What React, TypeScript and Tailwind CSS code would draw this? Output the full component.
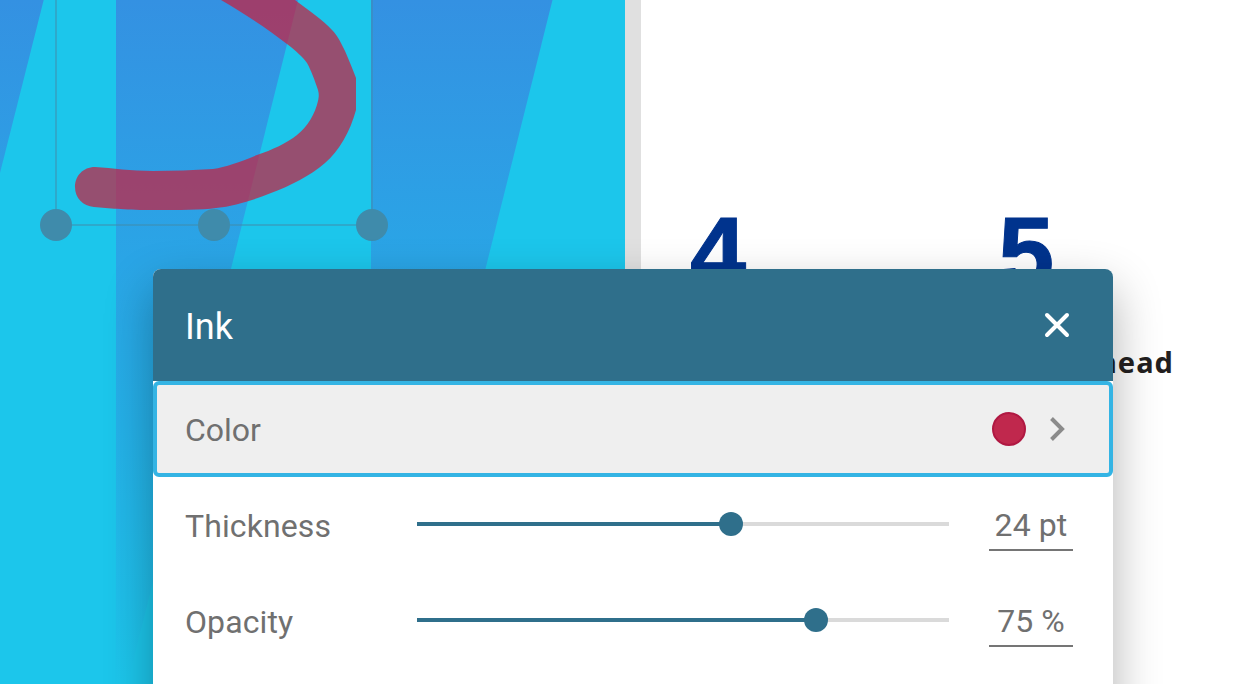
import React from "react";

function PageArtwork() {
  return (
    <svg className="block h-[684px] w-[625px] shrink-0" viewBox="0 0 625 684" fill="none">
      <defs>
        <linearGradient id="band" gradientUnits="userSpaceOnUse" x1="0" y1="0" x2="0" y2="684">
          <stop offset="0" stopColor="#3491e2" />
          <stop offset="0.38" stopColor="#2aa5e6" />
          <stop offset="0.62" stopColor="#25b0e8" />
          <stop offset="1" stopColor="#1cc6eb" />
        </linearGradient>
      </defs>
      <rect width="625" height="684" fill="#1cc6eb" />
      <path d="M0 0H43.7L0 173Z" fill="url(#band)" />
      <path d="M116 0H298L127.5 684H116Z" fill="url(#band)" />
      <path d="M371 0H552.5L382 684H371Z" fill="url(#band)" />
      <path
        d="M221 0C245 14 268 29 287 44C296 51 303 57 307 63C311 70 315 81 318 90C319 94 319 96 318 101C315 114 308 126 297 135C287 143 272 150 257 155C240 162 226 167 213 169C193 170 173 171 153 171C130 171 113 168 95 167C83 167 75 176 75 187C75 198 83 206 94 207C110 208 122 210 150 210C180 210 202 210 216 208C235 206 254 200 271 193C290 186 310 176 325 163C339 151 350 132 356 110V78C353 70 349 60 345 51C341 43 338 36 332 30C323 20 308 10 295 0Z"
        fill="#ca1d3c"
        fillOpacity="0.7"
      />
      <path d="M56 0V209M72 225H198M230 225H356M372 0V209" stroke="#3f8bab" strokeOpacity="0.5" strokeWidth="2" />
      <g fill="#3f8bab">
        <circle cx="56" cy="225" r="16" />
        <circle cx="214" cy="225" r="16" />
        <circle cx="372" cy="225" r="16" />
      </g>
    </svg>
  );
}

function SliderRow({ label, value, percent }: { label: string; value: string; percent: number }) {
  return (
    <div className="flex h-24 items-center pr-10 pl-8">
      <span className="w-[232px] pt-px tracking-[0.1px]">{label}</span>
      <div className="relative -mt-0.5 h-1 w-[532px] bg-[#dadada]">
        <div className="h-full bg-[#2f6f8b]" style={{ width: `${percent}%` }} />
        <div
          className="absolute top-1/2 size-6 -translate-x-1/2 -translate-y-1/2 rounded-full bg-[#2f6f8b]"
          style={{ left: `${percent}%` }}
        />
      </div>
      <div className="-mt-[3px] ml-10 flex h-[55px] w-[84px] items-center justify-center border-b-2 border-[#757575] pt-1 tracking-[0.1px]">
        {value}
      </div>
    </div>
  );
}

export default function App() {
  return (
    <main className="relative flex h-[684px] w-[1255px] overflow-hidden bg-white">
      <PageArtwork />
      <div className="w-4 shrink-0 bg-[#e0e0e0]" />
      <section className="relative grow font-bold">
        <span className="absolute top-[192px] left-[49px] font-['Liberation_Sans',sans-serif] text-[101px] leading-[120px] text-[#00338d] [-webkit-text-stroke:1px_#00338d]">4</span>
        <span className="absolute top-[192px] left-[357px] font-['Liberation_Sans',sans-serif] text-[101px] leading-[120px] text-[#00338d] [-webkit-text-stroke:1px_#00338d]">5</span>
        <span className="absolute top-[342px] left-[457px] font-['Noto_Sans',sans-serif] text-[29px] leading-10 tracking-[1px] text-[#231f20]">head</span>
      </section>

      <div className="absolute top-[269px] left-[153px] h-[500px] w-[960px] rounded-t-lg bg-white font-[Roboto,sans-serif] text-[32px] leading-10 text-[#707070] shadow-[0_20px_48px_rgba(0,0,0,0.31)]">
        <header className="flex h-28 items-center justify-between rounded-t-lg bg-[#2f6f8b] pr-11 pl-8 text-white">
          <h1 className="pt-1 text-[36px]">Ink</h1>
          <svg className="size-6 overflow-visible" viewBox="0 0 24 24" fill="none" stroke="currentColor" strokeWidth="4" strokeLinecap="round">
            <path d="M2 2L22 22M22 2L2 22" />
          </svg>
        </header>
        <button className="flex h-24 w-full items-center rounded-md border-4 border-[#34b4e4] bg-[#efefef] pr-11 pl-7 text-left">
          <span className="grow pt-px">Color</span>
          <span className="mr-6 size-[34px] rounded-full border-2 border-[#b01842] bg-[#c0284d]" />
          <svg className="h-6 w-[15px] overflow-visible" viewBox="0 0 15 24" fill="none" stroke="#8b8b8b" strokeWidth="4">
            <path d="M1.5 1.5L12 12L1.5 22.5" />
          </svg>
        </button>
        <SliderRow label="Thickness" value="24 pt" percent={59} />
        <SliderRow label="Opacity" value="75 %" percent={75} />
      </div>
    </main>
  );
}
